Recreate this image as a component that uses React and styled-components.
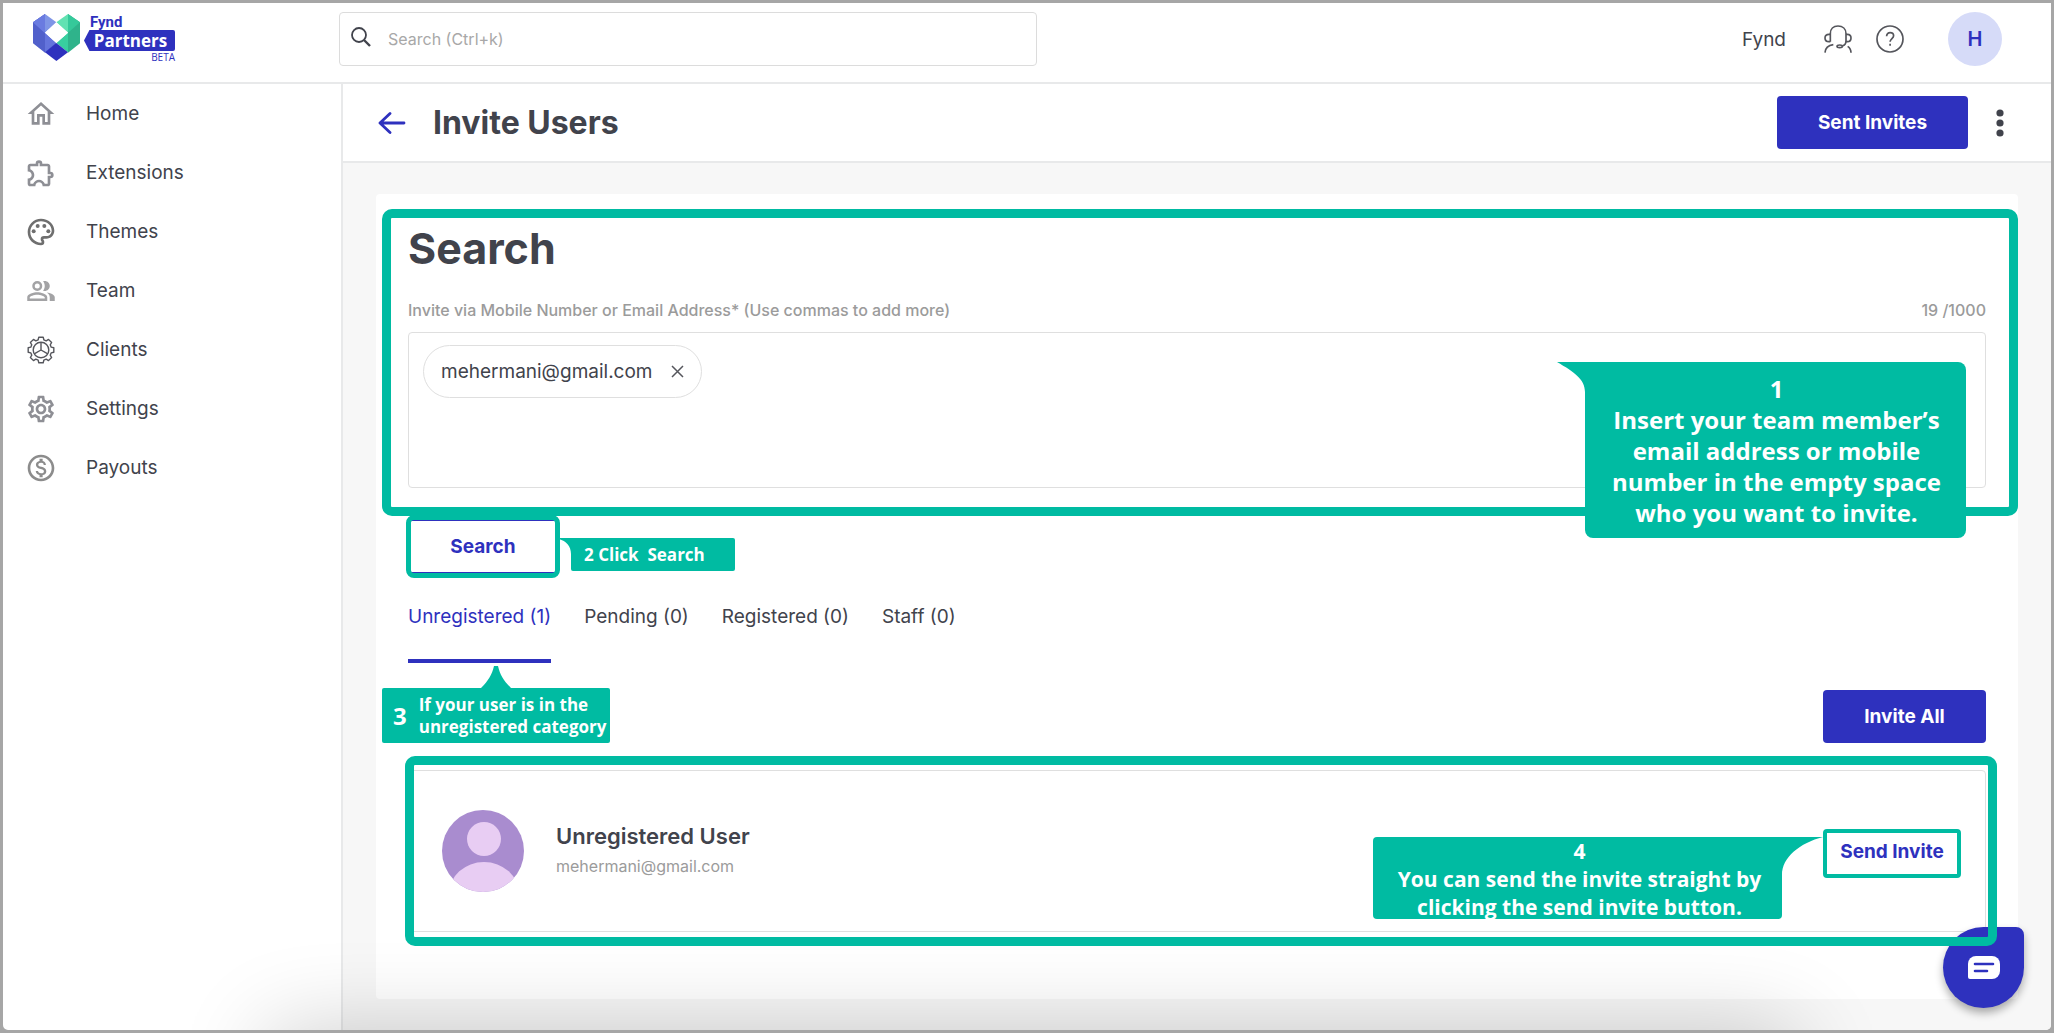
import React from "react";
import styled, { createGlobalStyle } from "styled-components";
import {
  MdOutlineHome,
  MdOutlineExtension,
  MdOutlinePalette,
  MdOutlineSettings,
  MdOutlineMonetizationOn,
} from "react-icons/md";

const color = {
  brand: "#2e31be",
  ink: "#41434c",
  muted: "#9b9b9b",
  line: "#e8e9ea",
  canvas: "#f7f7f7",
  teal: "#00bba2",
  frame: "#a6a6a6",
};

const GlobalStyle = createGlobalStyle`
  *, *::before, *::after { box-sizing: border-box; }
  body { margin: 0; background: ${color.frame}; }
  body, button, input { font-family: Inter, "Liberation Sans", sans-serif; color: ${color.ink}; }
  button { padding: 0; border: 0; background: none; cursor: pointer; }
  h1, h2, h3, p, ul { margin: 0; padding: 0; }
  svg { display: block; flex: none; }
`;

const Frame = styled.div`
  position: relative;
  display: flex;
  flex-direction: column;
  min-height: 100vh;
  border: 3px solid ${color.frame};
  border-radius: 0 0 8px 8px;
  background: #fff;
  overflow: hidden;
`;

/* ---------- top bar ---------- */

const TopBar = styled.header`
  display: flex;
  align-items: flex-start;
  height: 81px;
  padding: 9px 49px 0 0;
  border-bottom: 2px solid ${color.line};
`;

const LogoLink = styled.a`
  display: flex;
  align-items: flex-start;
  gap: 4px;
  flex: none;
  width: 336px;
  padding: 2px 0 0 30px;
  color: ${color.brand};
  text-decoration: none;
`;

const LogoWords = styled.span`
  display: flex;
  flex-direction: column;
`;

const LogoName = styled.span`
  padding-left: 6px;
  font: 700 15px/16px Roboto, sans-serif;
`;

const LogoBadge = styled.span`
  display: flex;
  justify-content: center;
  width: 91px;
  padding-left: 2px;
  border-radius: 2px;
  background: ${color.brand};
  clip-path: polygon(6% 0, 100% 0, 100% 100%, 6% 100%, 0 50%);
  color: #fff;
  font: 700 17px/21px "Open Sans", sans-serif;
`;

const LogoTag = styled.span`
  align-self: flex-end;
  font: 500 10px/12px "Open Sans", sans-serif;
`;

const GlobalSearch = styled.label`
  display: flex;
  align-items: center;
  gap: 15px;
  flex: 0 1 698px;
  height: 54px;
  padding: 0 11px;
  border: 1px solid #dcdcdc;
  border-radius: 4px;
`;

const GlobalSearchInput = styled.input`
  flex: 1;
  min-width: 0;
  border: 0;
  outline: 0;
  background: none;
  font-size: 16px;
  line-height: 24px;
  &::placeholder { color: #a8a8a8; opacity: 1; }
`;

const Account = styled.div`
  display: flex;
  align-items: center;
  gap: 24px;
  height: 54px;
  margin-left: auto;
`;

const CompanyName = styled.span`
  margin-right: 14px;
  font-size: 19px;
`;

const Avatar = styled.button`
  width: 54px;
  height: 54px;
  margin-left: 20px;
  border-radius: 50%;
  background: #d6dbf8;
  color: ${color.brand};
  font-size: 20px;
  font-weight: 600;
`;

/* ---------- side navigation ---------- */

const Body = styled.div`
  display: flex;
  flex: 1;
`;

const SideNav = styled.nav`
  flex: none;
  width: 340px;
  border-right: 2px solid ${color.line};
`;

const NavItem = styled.a`
  display: flex;
  align-items: center;
  gap: 29px;
  height: 59px;
  padding-left: 22px;
  color: ${color.ink};
  font-size: 19px;
  text-decoration: none;
`;

const NavIcon = styled.span`
  display: flex;
  justify-content: center;
  width: 32px;
  color: ${(p) => p.$tint};
`;

/* ---------- page ---------- */

const Main = styled.main`
  display: flex;
  flex: 1;
  flex-direction: column;
  min-width: 0;
  background: ${color.canvas};
`;

const PageHeader = styled.div`
  display: flex;
  align-items: center;
  height: 79px;
  padding: 0 47px 0 35px;
  border-bottom: 2px solid ${color.line};
  background: #fff;
`;

const PageTitle = styled.h1`
  margin: 0 auto 0 27px;
  font-size: 32px;
  line-height: 40px;
`;

const Button = styled.button`
  height: 53px;
  min-width: ${(p) => p.$width}px;
  border: ${(p) => (p.$outline ? `1px solid ${color.brand}` : "0")};
  border-radius: 4px;
  background: ${(p) => (p.$outline ? "#fff" : color.brand)};
  color: ${(p) => (p.$outline ? color.brand : "#fff")};
  font-size: 19px;
  font-weight: 700;
`;

const TextButton = styled.button`
  height: 44px;
  min-width: 138px;
  color: ${color.brand};
  font-size: 19px;
  font-weight: 700;
`;

const MenuButton = styled.button`
  margin-left: 28px;
`;

const Content = styled.div`
  display: flex;
  flex: 1;
  padding: 31px 33px;
`;

const Panel = styled.div`
  flex: 1;
  min-width: 0;
  padding: 26px 32px;
  border-radius: 4px;
  background: #fff;
`;

const SearchSection = styled.section`
  position: relative;
`;

const SectionTitle = styled.h2`
  font-size: 43px;
  line-height: 56px;
`;

const LabelRow = styled.div`
  display: flex;
  justify-content: space-between;
  margin: 24px 0 12px;
  color: ${color.muted};
  font-size: 16px;
  font-weight: 500;
  line-height: 20px;
`;

const RecipientBox = styled.div`
  display: flex;
  align-items: flex-start;
  gap: 12px;
  height: 156px;
  padding: 12px 14px;
  border: 1px solid #dfdfdf;
  border-radius: 4px;
`;

const Chip = styled.span`
  display: flex;
  align-items: center;
  gap: 18px;
  height: 53px;
  padding: 0 17px;
  border: 1px solid #dfdfdf;
  border-radius: 27px;
  font-size: 19px;
`;

const RecipientInput = styled.input`
  flex: 1;
  min-width: 0;
  height: 53px;
  border: 0;
  outline: 0;
  background: none;
  font-size: 19px;
`;

const Anchor = styled.div`
  position: relative;
  width: fit-content;
`;

const SearchAction = styled(Anchor)`
  margin-top: 32px;
`;

const TabArea = styled(Anchor)`
  margin-top: 32px;
`;

const Tabs = styled.div`
  display: flex;
  gap: 33px;
`;

const Tab = styled.button`
  padding-bottom: 30px;
  border-bottom: 4px solid ${(p) => (p.$active ? color.brand : "transparent")};
  color: ${(p) => (p.$active ? color.brand : color.ink)};
  font-size: 19px;
  line-height: 24px;
`;

const BulkActions = styled.div`
  display: flex;
  justify-content: flex-end;
  margin: 27px 0;
`;

const UserCard = styled.article`
  position: relative;
  display: flex;
  align-items: center;
  gap: 32px;
  height: 162px;
  padding: 0 24px 0 33px;
  border: 1px solid #dfdfdf;
  border-radius: 4px;
`;

const UserText = styled.div`
  flex: 1;
  padding-bottom: 2px;
`;

const UserName = styled.h3`
  font-size: 22px;
  font-weight: 600;
  line-height: 32px;
`;

const UserEmail = styled.p`
  color: ${color.muted};
  font-size: 16px;
  line-height: 28px;
`;

const ChatButton = styled.button`
  position: absolute;
  right: 27px;
  bottom: 22px;
  z-index: 1;
  display: grid;
  place-items: center;
  width: 81px;
  height: 81px;
  border-radius: 50% 8px 50% 50%;
  background: ${color.brand};
  box-shadow: 0 5px 8px rgba(0, 0, 0, 0.32);
`;

const BottomShade = styled.div`
  position: absolute;
  top: 100%;
  left: 265px;
  right: 255px;
  height: 120px;
  box-shadow: 0 0 90px rgba(0, 0, 0, 0.2);
  pointer-events: none;
`;

/* ---------- walkthrough overlay ---------- */

const Highlight = styled.div`
  position: absolute;
  inset: ${(p) => p.$inset};
  z-index: 2;
  border: ${(p) => p.$weight}px solid ${color.teal};
  border-radius: ${(p) => p.$radius}px;
  pointer-events: none;
`;

const Callout = styled.div`
  position: absolute;
  z-index: 3;
  background: ${color.teal};
  color: #fff;
  font-family: "Open Sans", "Noto Sans", sans-serif;
  font-weight: 700;
  white-space: nowrap;
`;

const InsertCallout = styled(Callout)`
  top: 142px;
  right: 20px;
  width: 381px;
  height: 176px;
  padding: 11px 0 0 2px;
  border-radius: 0 8px 8px 8px;
  font-size: 24px;
  line-height: 31px;
  text-align: center;
`;

const ClickCallout = styled(Callout)`
  top: 18px;
  left: 163px;
  width: 164px;
  padding-left: 13px;
  border-radius: 0 2px 2px 2px;
  font-size: 17px;
  line-height: 33px;
  white-space: pre;
`;

const CategoryCallout = styled(Callout)`
  top: 83px;
  left: -26px;
  display: flex;
  align-items: center;
  gap: 12px;
  width: 228px;
  height: 55px;
  padding-left: 11px;
  border-radius: 2px;
  font-size: 17px;
  line-height: 22px;
`;

const StepNumber = styled.span`
  font-size: 24px;
`;

const SendCallout = styled(Callout)`
  top: 8px;
  right: 179px;
  width: 409px;
  height: 82px;
  padding-left: 4px;
  border-radius: 4px 0 4px 4px;
  font-size: 21px;
  line-height: 28px;
  text-align: center;
`;

const Tail = styled.svg`
  position: absolute;
  fill: ${color.teal};
  ${(p) => p.$side === "left" && "right: 100%; top: 0; margin-right: -1px;"}
  ${(p) => p.$side === "right" && "left: 100%; top: 0; margin-left: -1px;"}
  ${(p) => p.$side === "top" && "left: 50%; bottom: 100%; transform: translateX(-50%);"}
`;

/* ---------- drawings ---------- */

const LogoMark = () => (
  <svg width="47" height="47" viewBox="0 0 141 141" aria-hidden="true">
    <path d="M0 25 36 0v58l34 31-34 27L0 88z" fill="#5160cb" />
    <path d="M0 25 36 0v115L36 56z" fill="#6474dc" />
    <path d="M0 25 36 0v58z" fill="#6a7be0" />
    <path d="M36 0 70 25 36 56z" fill="#7f95e6" />
    <path d="M36 56 70 87 36 115z" fill="#6474dc" />
    <path d="M105 0 70 25l35 31z" fill="#62e2b2" />
    <path d="M105 0 141 25v63l-36 28z" fill="#2fb38b" />
    <path d="M105 0 141 25 105 56z" fill="#35c99a" />
    <path d="M105 56 70 87l35 28z" fill="#38cf9f" />
    <path d="M70 25 105 56 70 87 36 56z" fill="#fff" />
    <path d="M70 87 105 115 70 141 36 115z" fill="#2e31be" />
  </svg>
);

const SearchIcon = () => (
  <svg width="20" height="24" viewBox="0 0 20 24" fill="none" stroke="#41434c" strokeWidth="1.800">
    <circle cx="8" cy="8" r="7" />
    <path d="m13 13 6 6" strokeWidth="2.400" />
  </svg>
);

const HeadsetIcon = () => (
  <svg width="28" height="28" viewBox="0 0 84 84" fill="none" stroke="#55565c" strokeWidth="5">
    <path d="M19 50V26C19 12 28 3 42 3s24 9 24 23v24" />
    <path d="M19 28h-4C7 28 3 33 3 39s4 11 12 11h4M66 28h4c8 0 11 5 11 11s-3 11-11 11h-4" />
    <path d="M66 48c0 8-4 13-11 15" />
    <ellipse cx="47" cy="64" rx="8" ry="4" />
    <path d="M3 83c1-14 9-22 25-24M71 64c6 4 10 11 10 19" />
  </svg>
);

const HelpIcon = () => (
  <svg width="28" height="28" viewBox="0 0 28 28" fill="none" stroke="#55565c" strokeWidth="1.700">
    <circle cx="14" cy="14" r="13" />
    <path d="M10.6 11.2c0-2.200 1.500-3.600 3.500-3.600s3.500 1.300 3.500 3.200c0 2.600-3.500 2.900-3.500 6" />
    <path d="M14.100 18.800v2" />
  </svg>
);

const TeamIcon = () => (
  <svg width="30" height="30" viewBox="0 0 24 24" fill="currentColor">
    <path d="M16.670 13.130C18.040 14.060 19 15.320 19 17v3h4v-3c0-2.180-3.570-3.470-6.330-3.870z" />
    <path d="M15 12c2.210 0 4-1.790 4-4s-1.790-4-4-4c-.47 0-.91.100-1.330.240C14.500 5.270 15 6.580 15 8s-.5 2.730-1.330 3.760c.42.140.86.240 1.330.240z" />
    <circle cx="9" cy="8" r="3" fill="none" stroke="currentColor" strokeWidth="2" />
    <path d="M9 13c-2.670 0-8 1.340-8 4v3h16v-3c0-2.660-5.330-4-8-4zm6 5H3v-.990C3.200 16.290 6.300 15 9 15s5.800 1.290 6 2v1z" />
  </svg>
);

const ClientsIcon = () => {
  const teeth = 8;
  const points = [];
  for (let i = 0; i < teeth; i += 1) {
    const a = (i * 2 * Math.PI) / teeth - Math.PI / 2;
    [[-0.27, 10.6], [-0.17, 13], [0.17, 13], [0.27, 10.6]].forEach(([d, r]) => {
      points.push(`${(14 + r * Math.cos(a + d)).toFixed(2)} ${(14 + r * Math.sin(a + d)).toFixed(2)}`);
    });
  }
  return (
    <svg width="28" height="28" viewBox="0 0 28 28" fill="none" stroke="#55565c" strokeWidth="1.400" strokeLinejoin="round">
      <path d={`M${points.join("L")}Z`} />
      <circle cx="14" cy="14" r="7.800" />
      <path d="M14 6.200V14m0 0-6.800 3.900M14 14l6.800 3.900" />
    </svg>
  );
};

const BackIcon = () => (
  <svg width="28" height="22" viewBox="0 0 28 22" fill="none" stroke="#2e31be" strokeWidth="2.800" strokeLinecap="round" strokeLinejoin="round">
    <path d="M26 11H2M12 1.500 2 11l10 9.500" />
  </svg>
);

const KebabIcon = () => (
  <svg width="8" height="28" viewBox="0 0 8 28" fill="#41434c">
    <circle cx="4" cy="4" r="3.600" />
    <circle cx="4" cy="14" r="3.600" />
    <circle cx="4" cy="24" r="3.600" />
  </svg>
);

const CloseIcon = () => (
  <svg width="13" height="13" viewBox="0 0 13 13" stroke="#55565c" strokeWidth="1.500">
    <path d="m1 1 11 11M12 1 1 12" />
  </svg>
);

const PersonPicture = () => (
  <svg width="82" height="82" viewBox="0 0 82 82" role="img" aria-label="Profile picture">
    <defs>
      <clipPath id="person-round"><circle cx="41" cy="41" r="41" /></clipPath>
    </defs>
    <g clipPath="url(#person-round)">
      <path d="M0 0h82v82H0z" fill="#a98ccf" />
      <circle cx="42" cy="29" r="17" fill="#e8cdf3" />
      <ellipse cx="42" cy="84" rx="35" ry="32" fill="#e8cdf3" />
    </g>
  </svg>
);

const ChatIcon = () => (
  <svg width="32" height="24" viewBox="0 0 32 24">
    <path d="M8 0h16a8 8 0 0 1 8 8v7a8 8 0 0 1-8 8H2a2 2 0 0 1-2-2V8a8 8 0 0 1 8-8z" fill="#fff" />
    <path d="M7 8h18M7 15h12" stroke="#2e31be" strokeWidth="2.600" strokeLinecap="round" />
  </svg>
);

const navItems = [
  { label: "Home", icon: <MdOutlineHome size={32} />, tint: "#8e8f95" },
  { label: "Extensions", icon: <MdOutlineExtension size={32} />, tint: "#8e8f95" },
  { label: "Themes", icon: <MdOutlinePalette size={32} />, tint: "#6f6f6f" },
  { label: "Team", icon: <TeamIcon />, tint: "#a3a3a5" },
  { label: "Clients", icon: <ClientsIcon />, tint: "#55565c" },
  { label: "Settings", icon: <MdOutlineSettings size={32} />, tint: "#8e8f95" },
  { label: "Payouts", icon: <MdOutlineMonetizationOn size={32} />, tint: "#8c8c8c" },
];

const tabs = ["Unregistered (1)", "Pending (0)", "Registered (0)", "Staff (0)"];

export default function App() {
  return (
    <>
      <GlobalStyle />
      <Frame>
        <TopBar>
          <LogoLink href="#home">
            <LogoMark />
            <LogoWords>
              <LogoName>Fynd</LogoName>
              <LogoBadge>Partners</LogoBadge>
              <LogoTag>BETA</LogoTag>
            </LogoWords>
          </LogoLink>
          <GlobalSearch>
            <SearchIcon />
            <GlobalSearchInput type="search" aria-label="Search" placeholder="Search (Ctrl+k)" />
          </GlobalSearch>
          <Account>
            <CompanyName>Fynd</CompanyName>
            <button type="button" aria-label="Support"><HeadsetIcon /></button>
            <button type="button" aria-label="Help"><HelpIcon /></button>
            <Avatar type="button">H</Avatar>
          </Account>
        </TopBar>

        <Body>
          <SideNav>
            {navItems.map((item) => (
              <NavItem key={item.label} href={`#${item.label.toLowerCase()}`}>
                <NavIcon $tint={item.tint}>{item.icon}</NavIcon>
                {item.label}
              </NavItem>
            ))}
          </SideNav>

          <Main>
            <PageHeader>
              <button type="button" aria-label="Back"><BackIcon /></button>
              <PageTitle>Invite Users</PageTitle>
              <Button type="button" $width={191}>Sent Invites</Button>
              <MenuButton type="button" aria-label="More"><KebabIcon /></MenuButton>
            </PageHeader>

            <Content>
              <Panel>
                <SearchSection>
                  <SectionTitle>Search</SectionTitle>
                  <LabelRow>
                    <label htmlFor="recipients">Invite via Mobile Number or Email Address* (Use commas to add more)</label>
                    <span>19 /1000</span>
                  </LabelRow>
                  <RecipientBox>
                    <Chip>
                      mehermani@gmail.com
                      <button type="button" aria-label="Remove"><CloseIcon /></button>
                    </Chip>
                    <RecipientInput id="recipients" type="text" />
                  </RecipientBox>
                  <Highlight $inset="-11px -32px -28px -26px" $weight={9} $radius={10} />
                  <InsertCallout>
                    <Tail $side="left" width="29" height="30" viewBox="0 0 29 30">
                      <path d="M0 0H29V30H28C28 17 17 10 0 0z" />
                    </Tail>
                    1<br />
                    Insert your team member’s<br />
                    email address or mobile<br />
                    number in the empty space<br />
                    who you want to invite.
                  </InsertCallout>
                </SearchSection>

                <SearchAction>
                  <Button type="button" $outline $width={150}>Search</Button>
                  <Highlight $inset="-5px -2px" $weight={5} $radius={8} />
                  <ClickCallout>
                    <Tail $side="left" width="13" height="16" viewBox="0 0 13 16">
                      <path d="M0 0H13V16H12C12 8 7 3 0 1z" />
                    </Tail>
                    {"2 Click  Search"}
                  </ClickCallout>
                </SearchAction>

                <TabArea>
                  <Tabs role="tablist">
                    {tabs.map((tab, i) => (
                      <Tab key={tab} type="button" role="tab" aria-selected={i === 0} $active={i === 0}>{tab}</Tab>
                    ))}
                  </Tabs>
                  <CategoryCallout>
                    <Tail $side="top" width="30" height="22" viewBox="0 0 30 22">
                      <path d="M0 22C7 15 11 9 13 0h4C19 9 23 15 30 22z" />
                    </Tail>
                    <StepNumber>3</StepNumber>
                    <span>
                      If your user is in the<br />
                      unregistered category
                    </span>
                  </CategoryCallout>
                </TabArea>

                <BulkActions>
                  <Button type="button" $width={163}>Invite All</Button>
                </BulkActions>

                <UserCard>
                  <PersonPicture />
                  <UserText>
                    <UserName>Unregistered User</UserName>
                    <UserEmail>mehermani@gmail.com</UserEmail>
                  </UserText>
                  <Anchor>
                    <TextButton type="button">Send Invite</TextButton>
                    <Highlight $inset="0 0 -5px 0" $weight={4} $radius={4} />
                    <SendCallout>
                      <Tail $side="right" width="42" height="38" viewBox="0 0 42 38">
                        <path d="M0 0H42C19 6 1 20 1 38H0z" />
                      </Tail>
                      4<br />
                      You can send the invite straight by<br />
                      clicking the send invite button.
                    </SendCallout>
                  </Anchor>
                  <Highlight $inset="-15px -12px -15px -4px" $weight={9} $radius={10} />
                </UserCard>
              </Panel>
            </Content>
          </Main>
        </Body>

        <ChatButton type="button" aria-label="Chat"><ChatIcon /></ChatButton>
        <BottomShade />
      </Frame>
    </>
  );
}
